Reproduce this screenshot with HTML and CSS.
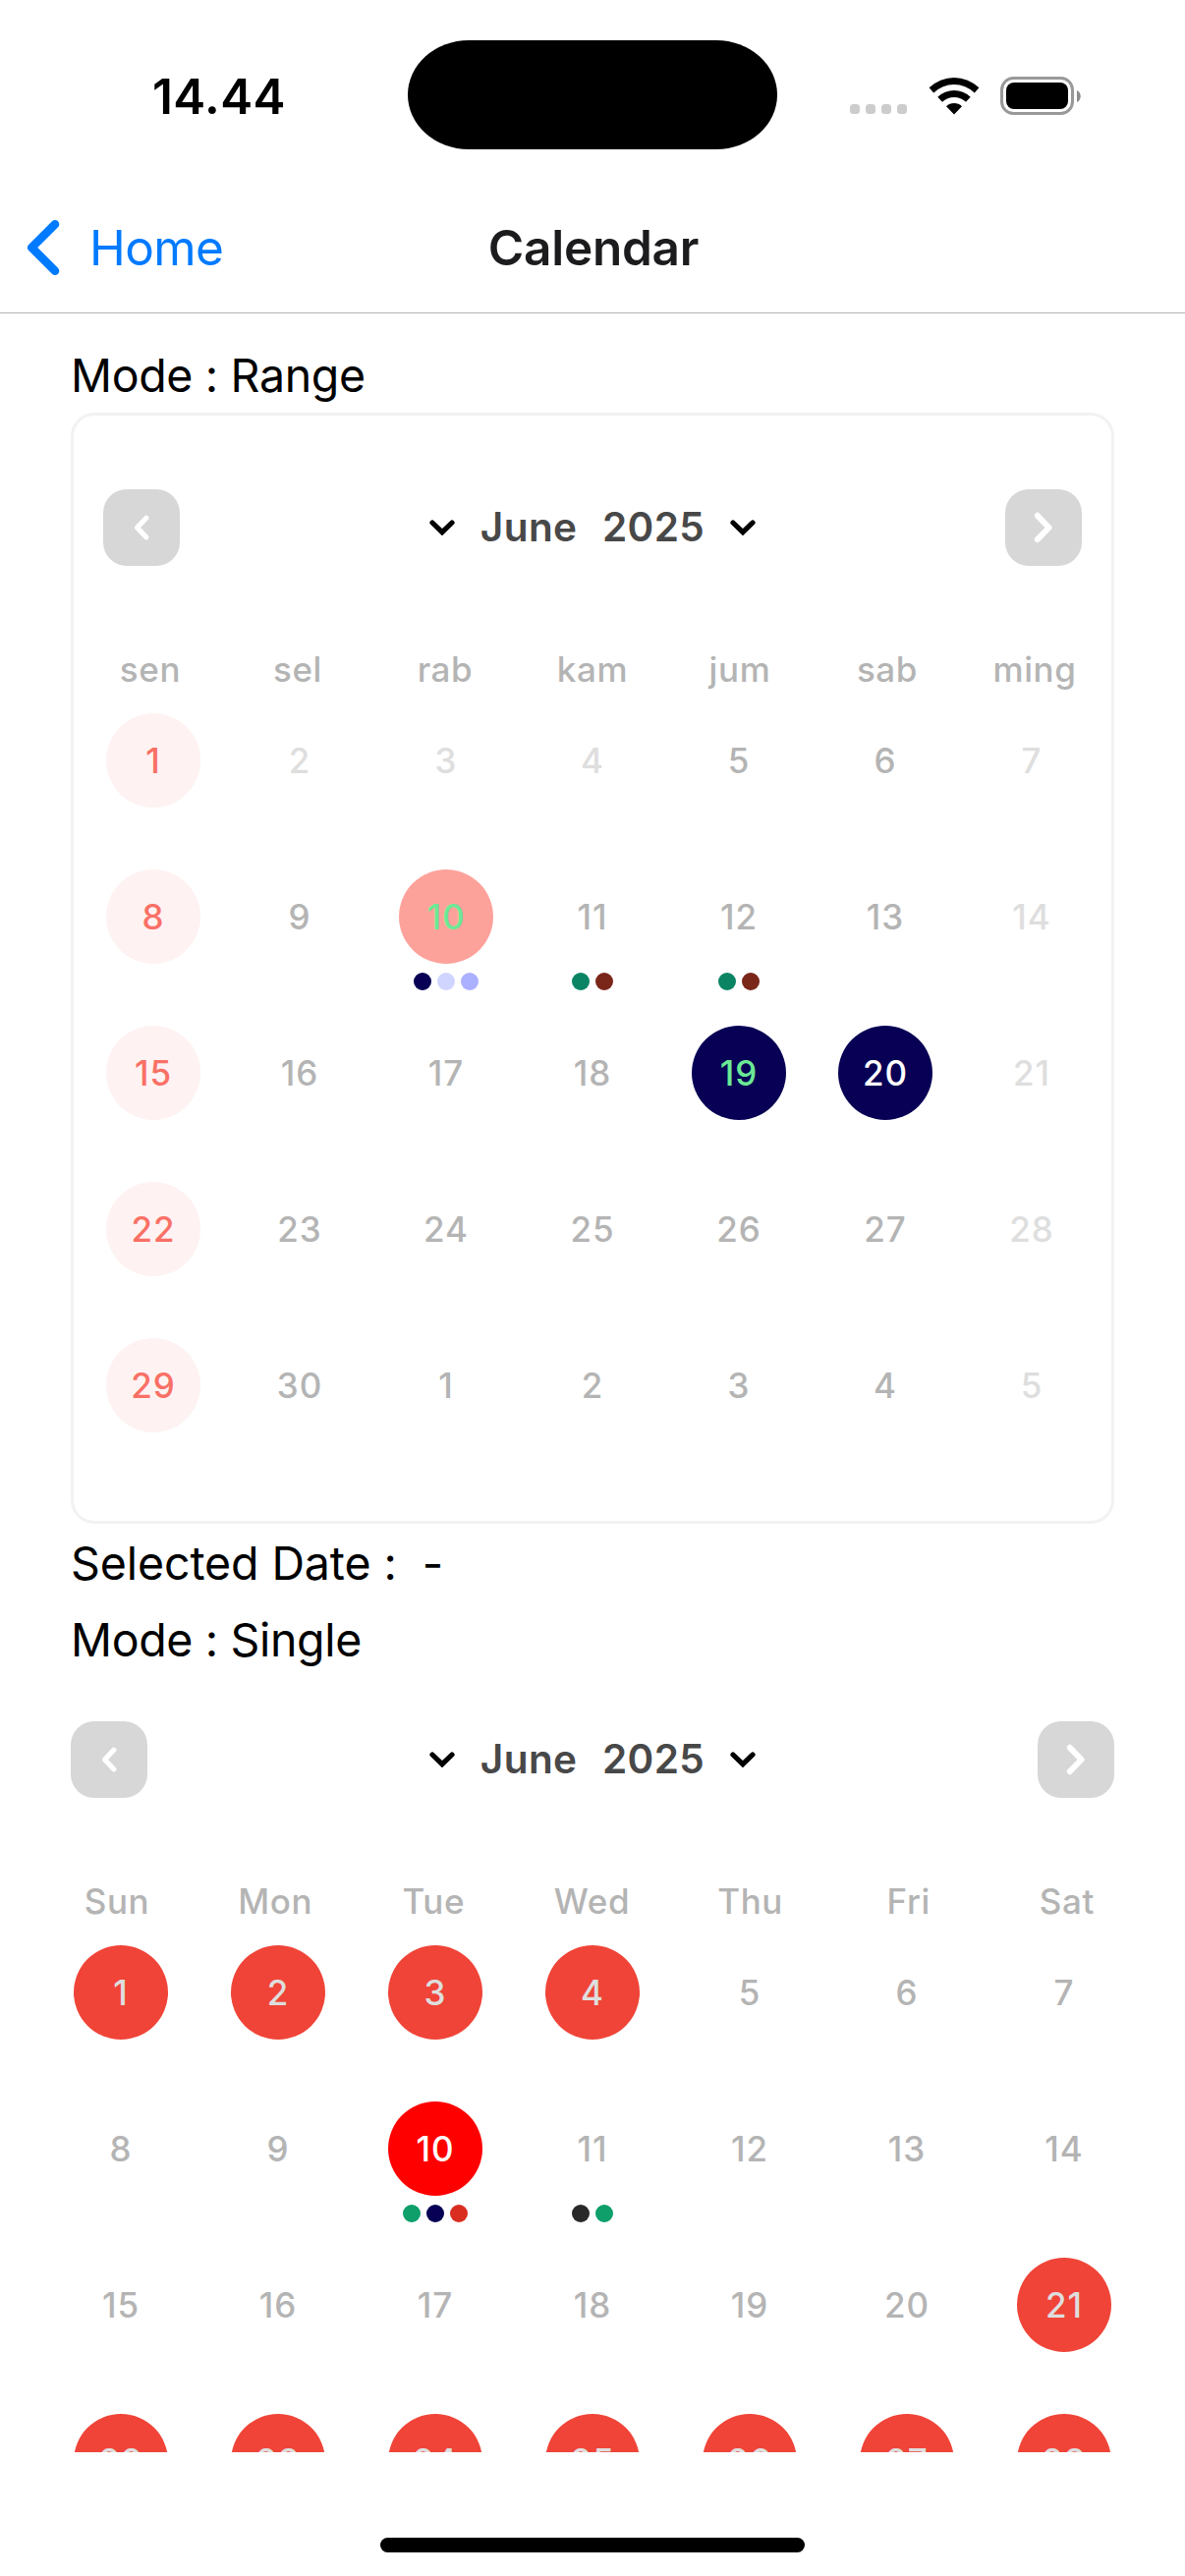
FILE: index.html
```html
<!DOCTYPE html>
<html lang="en">
<head>
<meta charset="utf-8">
<title>Calendar</title>
<link rel="stylesheet" href="styles.css">
</head>
<body>
<svg class="defs" width="0" height="0" aria-hidden="true">
  <symbol id="down" viewBox="0 0 26 16"><path d="M3 3l10 9.7L23 3" fill="none" stroke="#000" stroke-width="5.2" stroke-linecap="round"/></symbol>
  <symbol id="prev" viewBox="0 0 16 30"><path d="M12.8 5.2L3.6 15l9.2 9.8" fill="none" stroke="#fff" stroke-width="5.2" stroke-linecap="round" stroke-linejoin="round"/></symbol>
  <symbol id="next" viewBox="0 0 20 32"><path d="M3.8 3.8L15.6 16 3.8 28.2" fill="none" stroke="#fff" stroke-width="6" stroke-linecap="round" stroke-linejoin="round"/></symbol>
</svg>

<header class="status">
  <div class="time">14.44</div>
  <div class="island"></div>
  <div class="indicators">
    <div class="signal"><i></i><i></i><i></i><i></i></div>
    <svg class="wifi" width="52" height="38" viewBox="0 0 52 38">
      <path d="M.6 10.3a36.5 36.5 0 0 1 50.8 0l-4.6 5.1a29.8 29.8 0 0 0-41.6 0z"/>
      <path d="M9.3 19.7a24 24 0 0 1 33.4 0l-4.7 5.1a17.2 17.2 0 0 0-24 0z"/>
      <path d="M18 29.2a11.5 11.5 0 0 1 16 0l-8 8.4z"/>
    </svg>
    <svg class="battery" width="83" height="40" viewBox="0 0 83 40">
      <rect x="1.5" y="1.5" width="72" height="36" rx="12" fill="none" stroke="#999" stroke-width="3"/>
      <rect x="6" y="6" width="63" height="27" rx="8"/>
      <path d="M78 14c5 2 5 10 0 12z" fill="#8c8c8c"/>
    </svg>
  </div>
</header>

<nav class="nav">
  <a class="back">
    <svg width="34" height="58" viewBox="0 0 34 58"><path d="M29 5.3L5.2 29 29 52.7" fill="none" stroke="#007aff" stroke-width="8.6" stroke-linecap="round" stroke-linejoin="round"/></svg>
    <span>Home</span>
  </a>
  <h1 class="title">Calendar</h1>
</nav>

<main class="content">
  <p class="label">Mode : Range</p>

  <section class="calendar card">
    <div class="head">
      <button class="arrow"><svg width="16" height="30"><use href="#prev"/></svg></button>
      <div class="month"><svg width="26" height="16"><use href="#down"/></svg><span>June</span><span>2025</span><svg width="26" height="16"><use href="#down"/></svg></div>
      <button class="arrow"><svg width="20" height="32"><use href="#next"/></svg></button>
    </div>
    <div class="weekdays"><span>sen</span><span>sel</span><span>rab</span><span>kam</span><span>jum</span><span>sab</span><span>ming</span></div>
    <div class="days">
      <div class="day off"><b>1</b></div><div class="day faint"><b>2</b></div><div class="day faint"><b>3</b></div><div class="day faint"><b>4</b></div><div class="day"><b>5</b></div><div class="day"><b>6</b></div><div class="day faint"><b>7</b></div>
      <div class="day off"><b>8</b></div><div class="day"><b>9</b></div>
      <div class="day today"><b>10</b><div class="dots"><i class="navy"></i><i class="pale"></i><i class="lilac"></i></div></div>
      <div class="day"><b>11</b><div class="dots"><i class="teal"></i><i class="brown"></i></div></div>
      <div class="day"><b>12</b><div class="dots"><i class="teal"></i><i class="brown"></i></div></div>
      <div class="day"><b>13</b></div><div class="day faint"><b>14</b></div>
      <div class="day off"><b>15</b></div><div class="day"><b>16</b></div><div class="day"><b>17</b></div><div class="day"><b>18</b></div><div class="day picked mint"><b>19</b></div><div class="day picked"><b>20</b></div><div class="day faint"><b>21</b></div>
      <div class="day off"><b>22</b></div><div class="day"><b>23</b></div><div class="day"><b>24</b></div><div class="day"><b>25</b></div><div class="day"><b>26</b></div><div class="day"><b>27</b></div><div class="day faint"><b>28</b></div>
      <div class="day off"><b>29</b></div><div class="day"><b>30</b></div><div class="day"><b>1</b></div><div class="day"><b>2</b></div><div class="day"><b>3</b></div><div class="day"><b>4</b></div><div class="day faint"><b>5</b></div>
    </div>
  </section>

  <p class="label selected">Selected Date :  -</p>
  <p class="label single">Mode : Single</p>

  <section class="calendar plain">
    <div class="head">
      <button class="arrow"><svg width="16" height="30"><use href="#prev"/></svg></button>
      <div class="month"><svg width="26" height="16"><use href="#down"/></svg><span>June</span><span>2025</span><svg width="26" height="16"><use href="#down"/></svg></div>
      <button class="arrow"><svg width="20" height="32"><use href="#next"/></svg></button>
    </div>
    <div class="weekdays"><span>Sun</span><span>Mon</span><span>Tue</span><span>Wed</span><span>Thu</span><span>Fri</span><span>Sat</span></div>
    <div class="days">
      <div class="day blocked"><b>1</b></div><div class="day blocked"><b>2</b></div><div class="day blocked"><b>3</b></div><div class="day blocked"><b>4</b></div><div class="day"><b>5</b></div><div class="day"><b>6</b></div><div class="day"><b>7</b></div>
      <div class="day"><b>8</b></div><div class="day"><b>9</b></div>
      <div class="day current"><b>10</b><div class="dots"><i class="green"></i><i class="navy"></i><i class="red"></i></div></div>
      <div class="day"><b>11</b><div class="dots"><i class="dark"></i><i class="green"></i></div></div>
      <div class="day"><b>12</b></div><div class="day"><b>13</b></div><div class="day"><b>14</b></div>
      <div class="day"><b>15</b></div><div class="day"><b>16</b></div><div class="day"><b>17</b></div><div class="day"><b>18</b></div><div class="day"><b>19</b></div><div class="day"><b>20</b></div><div class="day blocked"><b>21</b></div>
      <div class="day blocked"><b>22</b></div><div class="day blocked"><b>23</b></div><div class="day blocked"><b>24</b></div><div class="day blocked"><b>25</b></div><div class="day blocked"><b>26</b></div><div class="day blocked"><b>27</b></div><div class="day blocked"><b>28</b></div>
    </div>
  </section>
</main>

<footer class="home"><div class="bar"></div></footer>
</body>
</html>
```
FILE: styles.css
```css
* {
  box-sizing: border-box;
}

body {
  margin: 0;
  width: 1206px;
  height: 2622px;
  display: flex;
  flex-direction: column;
  overflow: hidden;
  background: #fff;
  color: #000;
  font-family: Inter, "Liberation Sans", sans-serif;
}

svg {
  display: block;
  flex: none;
}

.defs {
  position: absolute;
}

/* Status bar */
.status {
  flex: none;
  height: 186px;
  display: grid;
  grid-template-columns: 415px 376px 415px;
  align-items: start;
}

.time {
  margin-top: 68px;
  padding-left: 155px;
  line-height: 60px;
  font-size: 49.5px;
  font-weight: 600;
  letter-spacing: 0.4px;
}

.island {
  margin-top: 41px;
  height: 111px;
  border-radius: 62px / 55.5px;
  background: #000;
}

.indicators {
  display: flex;
  align-items: flex-start;
  padding: 78px 0 0 74px;
}

.signal {
  display: flex;
  gap: 6px;
  margin-top: 28px;
}

.signal i {
  width: 10px;
  height: 10px;
  border-radius: 3.5px;
  background: #ccc;
}

.wifi {
  margin: 0.5px 0 0 21.5px;
}

.battery {
  margin-left: 21.5px;
}

/* Navigation bar */
.nav {
  flex: none;
  height: 133px;
  display: grid;
  grid-template-columns: 1fr auto 1fr;
  align-items: center;
  padding-left: 2px;
  border-bottom: 1px solid #b2b2b2;
}

.back {
  display: flex;
  align-items: center;
  gap: 30px;
  padding-left: 25px;
  color: #007aff;
  font-size: 49.5px;
  letter-spacing: -0.6px;
}

.title {
  margin: 0;
  color: #1c1c1e;
  font-size: 49.5px;
  font-weight: 600;
  letter-spacing: -0.25px;
}

/* Scrolling content, cut off above the home indicator */
.content {
  flex: none;
  height: 2177px;
  padding: 34px 72px 0;
  overflow: hidden;
}

.label {
  margin: 0;
  font-size: 46.5px;
  line-height: 58px;
  letter-spacing: -0.35px;
  white-space: pre;
}

.selected {
  margin-top: 11px;
  letter-spacing: -0.1px;
}

.single {
  margin-top: 20px;
}

/* Calendar */
.card {
  height: 1131px;
  margin-top: 9px;
  padding-top: 75px;
  border: 3px solid #f2f2f2;
  border-radius: 24px;
}

.plain {
  padding-top: 54px;
}

.head {
  display: flex;
  align-items: center;
  justify-content: space-between;
}

.card .head,
.card .weekdays {
  padding: 0 30px;
}

.arrow {
  width: 78px;
  height: 78px;
  padding: 0;
  display: flex;
  align-items: center;
  justify-content: center;
  border: 0;
  border-radius: 24px;
  background: #d7d7d7;
}

.month {
  display: flex;
  align-items: center;
  gap: 25.5px;
  color: #484848;
  font-size: 40.5px;
  font-weight: 600;
  line-height: 50px;
  letter-spacing: 0.4px;
}

.weekdays {
  display: grid;
  grid-template-columns: repeat(7, 96px);
  justify-content: space-between;
  margin-top: 83px;
  color: #b4b4b4;
  font-size: 35px;
  font-weight: 500;
  line-height: 44px;
  letter-spacing: 0.6px;
  text-align: center;
}

.plain .weekdays {
  grid-template-columns: repeat(7, 94px);
  padding-right: 1px;
}

.days {
  display: grid;
  grid-template-columns: repeat(7, 96px);
  grid-auto-rows: 159px;
  justify-content: space-between;
  margin-top: 23px;
  padding: 0 3px;
}

.card .days {
  padding: 0 33px;
}

.day {
  color: #b4b4b4;
}

.day b {
  display: block;
  border-radius: 50%;
  font-size: 35px;
  font-weight: 500;
  line-height: 97px;
  height: 96px;
  letter-spacing: 1px;
  text-align: center;
}

.faint {
  color: #dedede;
}

.off {
  color: #f97066;
}

.off b {
  background: #fef2f2;
}

.today {
  color: #6ce995;
}

.today b {
  background: #fda29b;
}

.picked {
  color: #fff;
}

.picked b {
  background: #070054;
}

.mint {
  color: #6ce995;
}

.blocked {
  color: #dedede;
}

.blocked b {
  background: #f04438;
}

.current {
  color: #fff;
}

.current b {
  background: #f00;
}

.dots {
  display: flex;
  justify-content: center;
  gap: 6px;
  margin-top: 9px;
}

.dots i {
  width: 18px;
  height: 18px;
  border-radius: 50%;
}

.navy { background: #070054; }
.pale { background: #d0d5ff; }
.lilac { background: #abb0ff; }
.teal { background: #0a8463; }
.brown { background: #7a271a; }
.green { background: #0e9f6a; }
.red { background: #d92d20; }
.dark { background: #292929; }

/* Home indicator */
.home {
  display: flex;
  justify-content: center;
  padding-top: 87px;
}

.bar {
  width: 432px;
  height: 15px;
  border-radius: 8px;
  background: #000;
}
```
